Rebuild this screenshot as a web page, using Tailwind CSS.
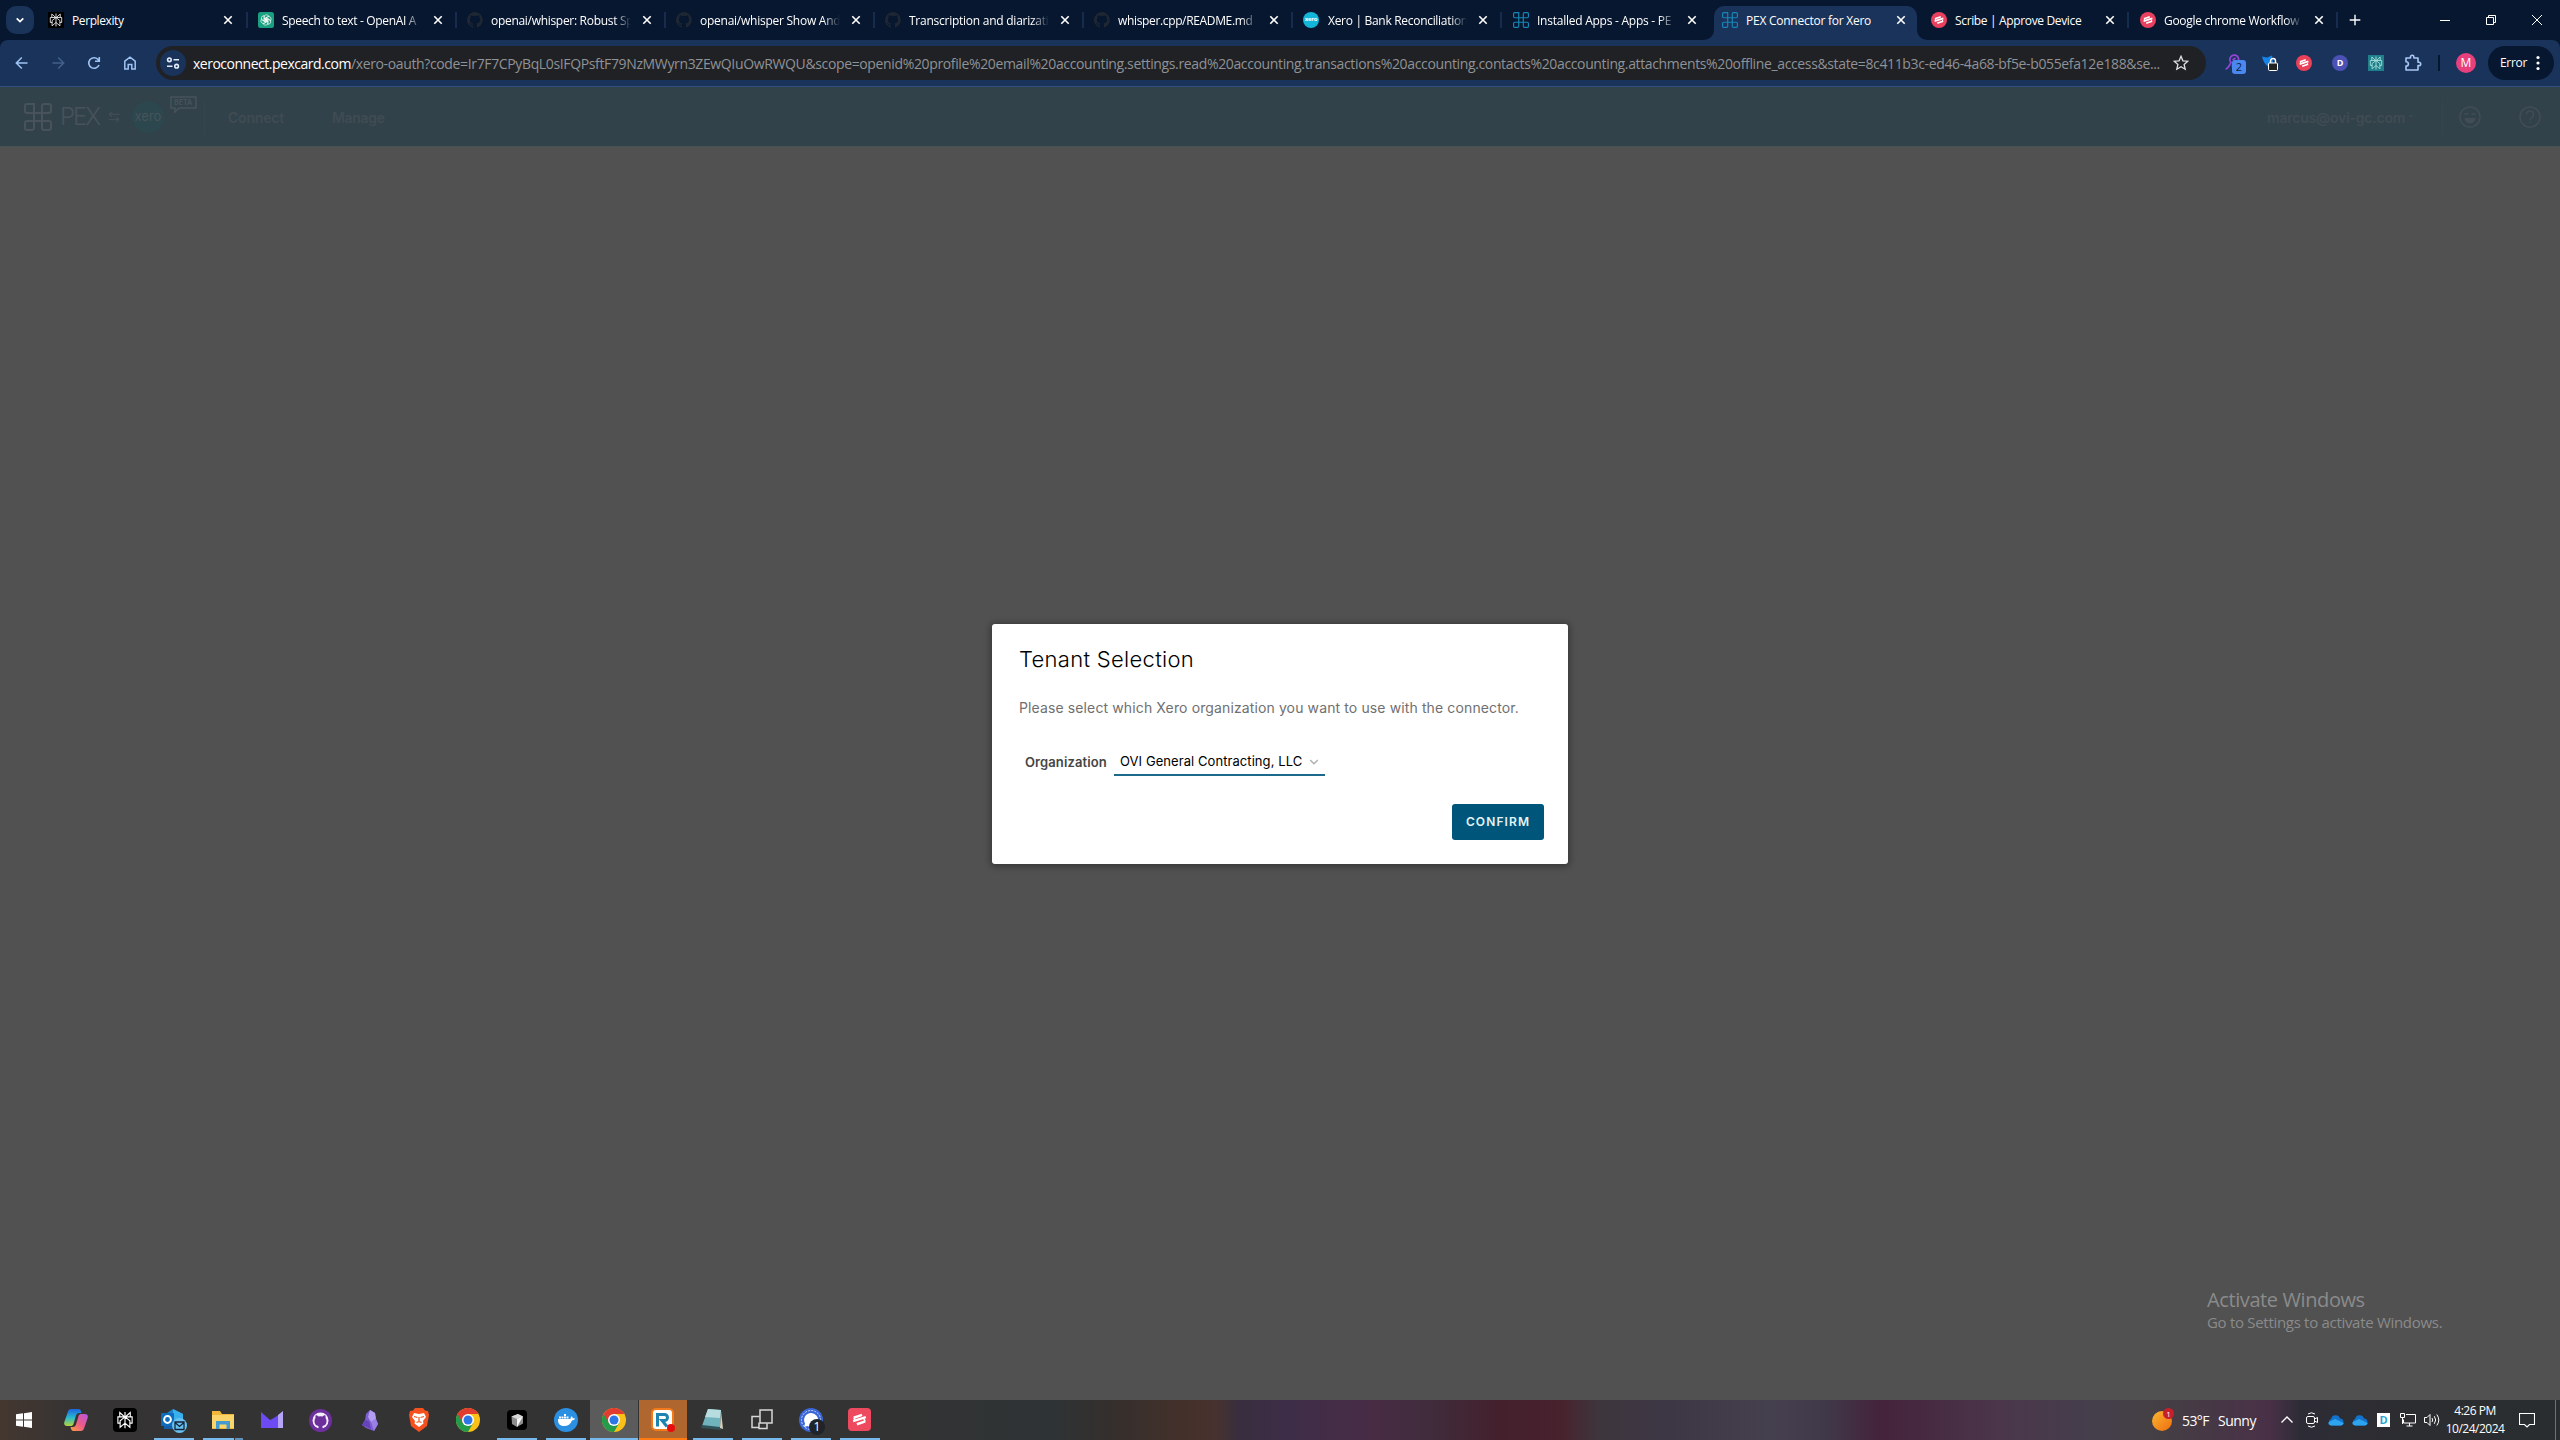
<!DOCTYPE html>
<html lang="en">
<head>
  <meta charset="UTF-8">
  <meta name="viewport" content="width=device-width, initial-scale=1.0">
  <title>PEX Connector for Xero</title>
  <script src="https://cdn.jsdelivr.net/npm/@tailwindcss/browser@4"></script>
</head>
<body class="w-[2560px] h-[1440px] overflow-hidden flex flex-col bg-[#515151] font-['Open_Sans',sans-serif]">

  <!-- Shared icons -->
  <svg class="hidden">
    <symbol id="close" viewBox="0 0 10 10"><path d="M1.3 1.3l7.4 7.4M8.7 1.3L1.3 8.7" stroke="#fff" stroke-width="1.6" fill="none"/></symbol>
    <symbol id="github" viewBox="0 0 16 16"><path fill="#1f2733" d="M8 0a8 8 0 0 0-2.5 15.6c.4.1.5-.2.5-.4v-1.500c-2.200.500-2.700-.900-2.700-.900-.400-.900-.900-1.200-.900-1.200-.700-.500.100-.500.100-.500.800.100 1.200.800 1.200.800.700 1.200 1.900.900 2.300.700.100-.500.300-.900.500-1.100-1.800-.200-3.600-.900-3.600-4 0-.900.300-1.600.800-2.100-.100-.200-.400-1 .100-2.100 0 0 .700-.200 2.200.800a7.600 7.600 0 0 1 4 0c1.500-1 2.200-.800 2.200-.800.400 1.100.200 1.900.100 2.100.500.600.800 1.300.800 2.100 0 3.100-1.900 3.700-3.600 3.900.300.300.500.700.500 1.500v2.200c0 .200.100.500.500.400A8 8 0 0 0 8 0z"/></symbol>
    <symbol id="pex" viewBox="0 0 28 28"><g fill="none" stroke="currentColor" stroke-width="2"><path d="M10 1H3a2 2 0 0 0-2 2v5a2 2 0 0 0 2 2h22a2 2 0 0 0 2-2V3a2 2 0 0 0-2-2h-5a2 2 0 0 0-2 2v22a2 2 0 0 0 2 2h5a2 2 0 0 0 2-2v-5a2 2 0 0 0-2-2H3a2 2 0 0 0-2 2v5a2 2 0 0 0 2 2h5a2 2 0 0 0 2-2V1z"/></g></symbol>
    <symbol id="scribe" viewBox="0 0 16 16"><path d="M4 6.800L9.800 4.800M3.600 9.100L12.400 6.400M6.200 11.300L12 9.300" stroke="#fff" stroke-width="1.700" fill="none"/><path d="M4 6.800l1 1.700M12 9.300l-1-1.700" stroke="#fff" stroke-width="1" fill="none"/></symbol>
    <symbol id="perplexity" viewBox="0 0 16 16"><path d="M8 1.500v13M3.800 5.500V2l4.200 3.800L12.200 2v3.500M2.300 5.500h11.400v5h-1.800V8.600L8 5.500 4.100 8.600v1.900H2.300zM4.100 10.200v3.600L8 10.500l3.900 3.300v-3.600" stroke="currentColor" stroke-width=".9" fill="none"/></symbol>
    <symbol id="chrome" viewBox="0 0 24 24"><circle cx="12" cy="12" r="12" fill="#fbc116"/><path d="M12 12L1.600 6A12 12 0 0 0 12 24l5.200-9z" fill="#249b4b"/><path d="M1.600 6a12 12 0 0 1 20.800 0H12l-5.200 9z" fill="#e23c30"/><circle cx="12" cy="12" r="6" fill="#fff"/><circle cx="12" cy="12" r="4.500" fill="#2c76e5"/></symbol>
    <symbol id="cloud" viewBox="0 0 16 11"><path d="M3.500 10.500A3.400 3.400 0 0 1 3 4a4.700 4.700 0 0 1 9-.6 3.600 3.600 0 0 1 .7 7.100z" fill="#1273ce"/><path d="M3 10.500c-1.800-.4-3-1.600-2.500-3.300L7 4l8.700 4c-.3 1.600-1.400 2.500-3 2.500z" fill="#2ea4ee"/></symbol>
  </svg>

  <!-- Tab strip -->
  <div class="h-10 flex shrink-0 bg-[#07172f] text-white text-[12px] tracking-[-0.25px]">
    <div class="w-10 pl-1.5 pt-1.5">
      <div class="w-7 h-7 rounded-[10px] bg-[#1a3358] flex items-center justify-center">
        <svg class="w-2.5 h-2.5" viewBox="0 0 10 10"><path d="M1.700 3.300L5 6.600l3.300-3.300" stroke="#fff" stroke-width="1.700" fill="none"/></svg>
      </div>
    </div>
    <div class="w-[209px] pl-2 pr-px flex items-center">
      <svg class="w-4 h-4 bg-black text-gray-200"><use href="#perplexity"/></svg>
      <span class="ml-2 mt-0.5 w-[138px] overflow-hidden whitespace-nowrap tracking-[-0.4px]">Perplexity</span>
      <svg class="ml-[13px] w-2.5 h-2.5"><use href="#close"/></svg>
      <span class="ml-auto w-0.5 h-4 bg-[#162c4c]"></span>
    </div>
    <div class="w-[209px] pl-[9px] pr-px flex items-center">
      <svg class="w-4 h-4" viewBox="0 0 16 16"><rect width="16" height="16" rx="2.500" fill="#1a9f80"/><g fill="none" stroke="#fff" stroke-width=".65"><path id="petal" d="M6 9.200V5.100a2.500 2.500 0 0 1 4.800-.8L7.500 6.200v3.900"/><use href="#petal" transform="rotate(60 8 8)"/><use href="#petal" transform="rotate(120 8 8)"/><use href="#petal" transform="rotate(180 8 8)"/><use href="#petal" transform="rotate(240 8 8)"/><use href="#petal" transform="rotate(300 8 8)"/></g></svg>
      <span class="ml-2 mt-0.5 w-[140px] overflow-hidden whitespace-nowrap tracking-[-0.33px] mask-r-from-88%">Speech to text - OpenAI A</span>
      <svg class="ml-[11px] w-2.5 h-2.5"><use href="#close"/></svg>
      <span class="ml-auto w-0.5 h-4 bg-[#162c4c]"></span>
    </div>
    <div class="w-[209px] pl-[9px] pr-px flex items-center">
      <svg class="w-4 h-4"><use href="#github"/></svg>
      <span class="ml-2 mt-0.5 w-[140px] overflow-hidden whitespace-nowrap tracking-[-0.3px] mask-r-from-88%">openai/whisper: Robust Sp</span>
      <svg class="ml-[11px] w-2.5 h-2.5"><use href="#close"/></svg>
      <span class="ml-auto w-0.5 h-4 bg-[#162c4c]"></span>
    </div>
    <div class="w-[209px] pl-[9px] pr-px flex items-center">
      <svg class="w-4 h-4"><use href="#github"/></svg>
      <span class="ml-2 mt-0.5 w-[140px] overflow-hidden whitespace-nowrap mask-r-from-88%">openai/whisper Show And</span>
      <svg class="ml-[11px] w-2.5 h-2.5"><use href="#close"/></svg>
      <span class="ml-auto w-0.5 h-4 bg-[#162c4c]"></span>
    </div>
    <div class="w-[209px] pl-[9px] pr-px flex items-center">
      <svg class="w-4 h-4"><use href="#github"/></svg>
      <span class="ml-2 mt-0.5 w-[140px] overflow-hidden whitespace-nowrap mask-r-from-88%">Transcription and diarizati</span>
      <svg class="ml-[11px] w-2.5 h-2.5"><use href="#close"/></svg>
      <span class="ml-auto w-0.5 h-4 bg-[#162c4c]"></span>
    </div>
    <div class="w-[209px] pl-[9px] pr-px flex items-center">
      <svg class="w-4 h-4"><use href="#github"/></svg>
      <span class="ml-2 mt-0.5 w-[140px] overflow-hidden whitespace-nowrap tracking-[-0.35px] mask-r-from-88%">whisper.cpp/README.md</span>
      <svg class="ml-[11px] w-2.5 h-2.5"><use href="#close"/></svg>
      <span class="ml-auto w-0.5 h-4 bg-[#162c4c]"></span>
    </div>
    <div class="w-[209px] pl-[9px] pr-px flex items-center">
      <span class="w-4 h-4 rounded-full bg-[#13b5d8] text-[6px] leading-[15px] text-center tracking-[-0.2px] font-bold">xero</span>
      <span class="ml-[9px] mt-0.5 w-[139px] overflow-hidden whitespace-nowrap tracking-[-0.3px] mask-r-from-88%">Xero | Bank Reconciliation</span>
      <svg class="ml-[11px] w-2.5 h-2.5"><use href="#close"/></svg>
      <span class="ml-auto w-0.5 h-4 bg-[#162c4c]"></span>
    </div>
    <div class="w-[209px] pl-[10px] flex items-center">
      <svg class="w-4 h-4 text-[#1787b8]"><use href="#pex"/></svg>
      <span class="ml-2 mt-0.5 w-[139px] overflow-hidden whitespace-nowrap mask-r-from-88%">Installed Apps - Apps - PE</span>
      <svg class="ml-[11px] w-2.5 h-2.5"><use href="#close"/></svg>
    </div>
    <div class="w-[209px] pl-[2px] pr-1 pt-1.5 relative flex">
      <div class="flex-1 pl-2 pb-1.5 rounded-t-[10px] bg-[#1a335a] flex items-center">
        <svg class="w-4 h-4 text-[#1787b8]"><use href="#pex"/></svg>
        <span class="ml-2 mt-0.5 w-[138px] overflow-hidden whitespace-nowrap">PEX Connector for Xero</span>
        <svg class="ml-3 w-2.5 h-2.5"><use href="#close"/></svg>
      </div>
      <svg class="absolute -left-2 bottom-0 w-2.5 h-2.5" viewBox="0 0 10 10"><path d="M10 0v10H0A10 10 0 0 0 10 0z" fill="#1a335a"/></svg>
      <svg class="absolute -right-1.5 bottom-0 w-2.5 h-2.5" viewBox="0 0 10 10"><path d="M0 0v10h10A10 10 0 0 1 0 0z" fill="#1a335a"/></svg>
    </div>
    <div class="w-[209px] pl-[10px] pr-px flex items-center">
      <svg class="w-4 h-4 rounded-full bg-[#e9405f]"><use href="#scribe"/></svg>
      <span class="ml-2 mt-0.5 w-[138px] overflow-hidden whitespace-nowrap tracking-[-0.35px]">Scribe | Approve Device</span>
      <svg class="ml-[12px] w-2.5 h-2.5"><use href="#close"/></svg>
      <span class="ml-auto w-0.5 h-4 bg-[#162c4c]"></span>
    </div>
    <div class="w-[209px] pl-[10px] pr-px flex items-center">
      <svg class="w-4 h-4 rounded-full bg-[#e9405f]"><use href="#scribe"/></svg>
      <span class="ml-2 mt-0.5 w-[138px] overflow-hidden whitespace-nowrap tracking-[-0.3px] mask-r-from-88%">Google chrome Workflow</span>
      <svg class="ml-3 w-2.5 h-2.5"><use href="#close"/></svg>
      <span class="ml-auto w-0.5 h-4 bg-[#162c4c]"></span>
    </div>
    <div class="flex-1 flex items-center">
      <svg class="ml-[10px] w-3 h-3" viewBox="0 0 12 12"><path d="M6 .7v10.600M.7 6h10.600" stroke="#fff" stroke-width="1.400"/></svg>
      <svg class="ml-[79px] w-[10px] h-[10px]" viewBox="0 0 10 10"><path d="M0 5.500h10" stroke="#fff"/></svg>
      <svg class="ml-9 w-[10px] h-[10px]" viewBox="0 0 10 10"><path d="M.5 2.500h7v7h-7zM2.500 2.500v-2h7v7h-2" stroke="#fff" fill="none"/></svg>
      <svg class="ml-9 w-[10px] h-[10px]" viewBox="0 0 10 10"><path d="M0 0l10 10M10 0L0 10" stroke="#fff"/></svg>
    </div>
  </div>

  <!-- Toolbar -->
  <div class="bg-[#07172f]">
    <div class="h-[46px] rounded-t-lg bg-[#1a335a] flex items-center">
      <svg class="ml-[14px] w-4 h-4" viewBox="0 0 16 16"><path d="M13.500 8H2.500M7.800 2.500L2.300 8l5.500 5.500" stroke="#9fc3f3" stroke-width="1.500" fill="none"/></svg>
      <svg class="ml-5 w-4 h-4" viewBox="0 0 16 16"><path d="M2.500 8h11M8.200 2.500L13.700 8l-5.500 5.500" stroke="#43608c" stroke-width="1.500" fill="none"/></svg>
      <svg class="ml-5 w-4 h-4" viewBox="0 0 16 16"><path d="M13 10A5.300 5.300 0 1 1 11.800 4.200L13.300 6M13.300 2v4.200H9" stroke="#9fc3f3" stroke-width="1.600" fill="none"/></svg>
      <svg class="ml-5 w-4 h-4" viewBox="0 0 16 16"><path d="M2.800 6.200L8 2.100l5.200 4.100v7.700H9.800V9.500H6.200v4.400H2.800z" stroke="#9fc3f3" stroke-width="1.500" fill="none"/></svg>
      <div class="ml-[18px] w-[2050px] h-[34px] rounded-full bg-[#202124] flex items-center">
        <div class="ml-1 w-[26px] h-[26px] rounded-full bg-[#1a335a] flex items-center justify-center">
          <svg class="w-3.5 h-3.5" viewBox="0 0 14 14"><g stroke="#e3ecfa" stroke-width="1.600" fill="none"><circle cx="3.400" cy="3.800" r="1.800"/><path d="M7.500 3.800H13M1 10.200h5.500"/><circle cx="10.600" cy="10.200" r="1.800"/></g></svg>
        </div>
        <span class="ml-[7px] w-[1965px] whitespace-nowrap text-[14px] text-[#8f9296] tracking-[-0.36px]"><span class="text-white tracking-[-0.49px]">xeroconnect.pexcard.com</span>/xero-oauth?code=Ir7F7CPyBqL0sIFQPsftF79NzMWyrn3ZEwQIuOwRWQU&amp;scope=openid%20profile%20email%20accounting.settings.read%20accounting.transactions%20accounting.contacts%20accounting.attachments%20offline_access&amp;state=8c411b3c-ed46-4a68-bf5e-b055efa12e188&amp;se...</span>
        <svg class="ml-[15px] w-4 h-4" viewBox="0 0 16 16"><path d="M8 1.300l1.900 4.500 4.900.4-3.700 3.200 1.100 4.800L8 11.700l-4.200 2.500 1.100-4.800L1.200 6.200l4.900-.4z" stroke="#dfe1e5" stroke-width="1.300" fill="none"/></svg>
      </div>
      <div class="relative ml-[18px] w-6 h-6">
        <svg class="w-[18px] h-[18px] mt-0.5" viewBox="0 0 18 18"><path d="M1.500 16C4 16 5 13 7 9.500A4.400 4.400 0 1 1 12 10.500c-2-.5-3 .5-4 3M8.500 7l3-2" stroke="#9445d8" stroke-width="1.700" fill="none"/></svg>
        <span class="absolute left-2 top-[9px] w-3.5 h-3.5 rounded-[3px] bg-[#4a88f0] text-[#0a1d3c] text-[11px] leading-[14px] text-center">2</span>
      </div>
      <svg class="ml-3.5 w-4 h-4" viewBox="0 0 16 16"><path d="M0 1.500l5 1 5-2 1 7-3 5C4 11 1 6.500 0 1.500z" fill="#1683e8"/><rect x="6.500" y="8" width="9" height="7.500" rx="1" fill="#222" stroke="#fff"/><path d="M8.500 8V6a2.500 2.500 0 0 1 5 0v2" stroke="#fff" stroke-width="1.400" fill="none"/></svg>
      <svg class="ml-[18px] w-4 h-4 rounded-full bg-[#ea4058]"><use href="#scribe"/></svg>
      <span class="ml-5 w-4 h-4 rounded-full bg-[#4c51b5] text-white text-[9px] leading-4 font-bold text-center">D</span>
      <svg class="ml-5 w-4 h-4 bg-[#1f7f8a] text-[#a8dfdc]"><use href="#perplexity"/></svg>
      <svg class="ml-5 w-[18px] h-[18px]" viewBox="0 0 18 18"><path d="M2 4h4.500V3a1.700 1.700 0 0 1 3.400 0v1H14v4.200h1a1.700 1.700 0 0 1 0 3.400h-1V16H2v-4c3.200 0 3.200-4.200 0-4.200z" stroke="#a9c7f5" stroke-width="1.600" fill="none" stroke-linejoin="round"/></svg>
      <span class="ml-[16px] w-0.5 h-4 bg-[#07172f]"></span>
      <span class="ml-4 w-5 h-5 rounded-full bg-[#e8407c] text-white text-[12px] leading-5 text-center">M</span>
      <div class="ml-3 w-[66px] h-[34px] rounded-full bg-[#07172f] text-white text-[12px] flex items-center">
        <span class="ml-3 w-[26px] tracking-[-0.3px]">Error</span>
        <svg class="ml-[10px] w-1 h-4" viewBox="0 0 4 16"><g fill="#fff"><circle cx="2" cy="2.500" r="1.600"/><circle cx="2" cy="8" r="1.600"/><circle cx="2" cy="13.500" r="1.600"/></g></svg>
      </div>
    </div>
    <div class="h-px bg-[#33507c]"></div>
  </div>

  <!-- App header, dimmed by the modal backdrop -->
  <header class="h-[60px] shrink-0 bg-[#31424b] border-b border-[#4a5153] flex items-center pt-px font-['Inter',sans-serif] text-[#404b52] whitespace-nowrap">
    <svg class="ml-6 w-[28px] h-[28px] shrink-0 text-[#47525a]"><use href="#pex"/></svg>
    <span class="ml-2 w-[39px] shrink-0 text-[24px] font-light tracking-[-2px] text-[#47525a]">PEX</span>
    <svg class="ml-[9px] w-3 h-3 shrink-0" viewBox="0 0 12 12"><path d="M4 .8L1 3.300l3 2.500M1 3.300h10.500M8 6.200l3 2.500-3 2.500M11 8.700H.5" stroke="#47525a" fill="none"/></svg>
    <span class="ml-3 w-8 h-8 shrink-0 rounded-full bg-[#2d474e] text-[#46545a] text-[13px] leading-[30px] flex justify-center">xero</span>
    <div class="relative w-[40px] h-14 shrink-0">
      <svg class="absolute left-[6px] top-[7px] w-[27px] h-[18px]" viewBox="0 0 27 18"><path d="M1 1h25v11H9l-4 4v-4H1z" stroke="#47535a" stroke-width="1.500" fill="none"/></svg>
      <span class="absolute left-[10px] top-[8px] text-[7px] leading-[11px] font-bold text-[#47535a]">BETA</span>
    </div>
    <span class="w-px h-9 bg-[#35454e]"></span>
    <span class="ml-[23px] w-[56px] text-[14px] font-semibold tracking-[-0.2px]">Connect</span>
    <span class="ml-[48px] text-[14px] font-semibold tracking-[-0.3px]">Manage</span>
    <div class="ml-auto flex items-center">
      <span class="w-[137px] text-[14px] font-semibold tracking-[-0.2px]">marcus@ovi-gc.com</span>
      <svg class="ml-1 w-1.5 h-1" viewBox="0 0 6 4"><path d="M0 0h6L3 3z" fill="#3c4850"/></svg>
      <span class="ml-[28px] w-px h-9 bg-[#35454e]"></span>
      <svg class="ml-4 w-[22px] h-[22px]" viewBox="0 0 22 22"><g fill="none" stroke="#414c53" stroke-width="1.600"><circle cx="11" cy="11" r="10"/><path d="M6 9c0-2 3-2 3 0M13 9c0-2 3-2 3 0"/></g><path d="M5.500 12h11a5.500 5.500 0 0 1-11 0z" fill="#414c53"/></svg>
      <svg class="ml-[38px] mr-[19px] w-[22px] h-[22px]" viewBox="0 0 22 22"><g fill="none" stroke="#414c53" stroke-width="1.600"><circle cx="11" cy="11" r="10"/><path d="M7.500 8.500a3.500 3.500 0 1 1 5 3.200c-1 .5-1.500 1-1.500 2.300M11 15.500v1.600"/></g></svg>
    </div>
  </header>

  <!-- Page -->
  <main class="relative flex-1 flex flex-col items-center pt-[477px] font-['Inter',sans-serif]">
    <div class="w-[576px] h-[240px] rounded-[3px] bg-white shadow-[0_1px_6px_2px_rgba(0,0,0,0.3)] pl-[27px] pr-6 flex flex-col">
      <h1 class="mt-[19px] text-[22px] leading-8 font-light text-black tracking-[0.3px]">Tenant Selection</h1>
      <p class="mt-[21px] text-[14px] leading-6 text-[#707070] tracking-[0.12px] whitespace-nowrap">Please select which Xero organization you want to use with the connector.</p>
      <div class="mt-[29px] flex h-7">
        <label class="ml-1.5 w-[89px] pt-1 text-[13px] leading-6 mt-[-3px] font-semibold text-[#454545] tracking-[0.1px]">Organization</label>
        <div class="w-[211px] h-[27px] pl-1.5 pt-px border-b-2 border-[#1b6a8c] flex items-center text-[13px] text-black">
          <span class="w-[183px] whitespace-nowrap tracking-[0.07px]">OVI General Contracting, LLC</span>
          <svg class="ml-[6px] w-2.5 h-2.5" viewBox="0 0 10 10"><path d="M1.200 3L5 6.800 8.800 3" stroke="#b0b0b0" stroke-width="1.400" fill="none"/></svg>
        </div>
      </div>
      <button class="mt-[27px] self-end w-[92px] h-9 rounded-[3px] bg-[#00567a] text-[#e4f3f8] text-[12px] font-semibold tracking-[1.1px]">CONFIRM</button>
    </div>
    <div class="absolute left-[2207px] top-[1139px] font-['Open_Sans',sans-serif] text-[#8b8b8b]">
      <p class="text-[20px] leading-7 tracking-[-0.4px] whitespace-nowrap">Activate Windows</p>
      <p class="text-[15px] leading-[17px] tracking-[-0.3px] whitespace-nowrap">Go to Settings to activate Windows.</p>
    </div>
  </main>

  <!-- Taskbar -->
  <footer class="h-10 shrink-0 flex items-center bg-[linear-gradient(90deg,#443730_0px,#363333_70px,#333333_220px,#333_900px,#2e3335_1050px,#342f2d_1110px,#45302a_1190px,#48322f_1215px,#382e3f_1240px,#3e2d48_1290px,#482c45_1370px,#402c3c_1430px,#44202d_1500px,#48222d_1560px,#3e363d_1600px,#3d3645_1670px,#45404e_1770px,#40394a_1825px,#44233c_1880px,#4b364b_2000px,#443f4b_2100px,#444044_2150px,#493047_2270px,#2d2c36_2300px,#2c2d31_2400px,#292d30_2560px)]">
    <div class="w-12 h-10 flex items-center justify-center">
      <svg class="w-4 h-4" viewBox="0 0 16 16"><path d="M0 2.300L7 1.300v6.300H0zM8 1.200L16 0v7.600H8zM0 8.500h7v6.300l-7-1zM8 8.500h8V16l-8-1.200z" fill="#fff"/></svg>
    </div>
    <div class="w-[49px] ml-[3px] h-10 flex items-center justify-center">
      <svg class="w-6 h-6" viewBox="0 0 24 24"><defs><linearGradient id="cpA" x1="0" y1="0" x2="0" y2="1"><stop offset="0" stop-color="#1c63e0"/><stop offset=".5" stop-color="#28b8d0"/><stop offset="1" stop-color="#b6d63a"/></linearGradient><linearGradient id="cpB" x1="0" y1="1" x2="1" y2="0"><stop offset="0" stop-color="#f9a03c"/><stop offset=".5" stop-color="#ed5a8c"/><stop offset="1" stop-color="#b259e0"/></linearGradient></defs><path d="M7 1h7.500c2 0 2.500 2 3 4h-2.500c-1.500 0-2.500 1-3 2.500L9.500 16c-.5 1.500-1.500 2-3 2H3c-2.500 0-3.500-2-2.500-4.500l3.500-10C4.500 2 5.500 1 7 1z" fill="url(#cpA)"/><path d="M17 23H9.500c-2 0-2.500-2-3-4H9c1.500 0 2.500-1 3-2.500L14.500 8c.5-1.500 1.500-2 3-2H21c2.500 0 3.500 2 2.500 4.500l-3.500 10C19.500 22 18.500 23 17 23z" fill="url(#cpB)"/></svg>
    </div>
    <div class="w-[49px] h-10 flex items-center justify-center">
      <svg class="w-6 h-6 rounded-sm bg-black p-0.5 text-white"><use href="#perplexity"/></svg>
    </div>
    <div class="w-[49px] h-10 px-[5px] flex flex-col items-center">
      <svg class="mt-[7px] w-[27px] h-[27px]" viewBox="0 0 27 27"><path d="M4 8l9-6 10 5v13H4z" fill="#1c82d2"/><path d="M13 2l10 5v6H13z" fill="#37b0ec"/><path d="M4 15h19v7H4z" fill="#155fa8"/><rect x="1" y="6" width="13" height="13" rx="1" fill="#0f6cbd"/><circle cx="7.500" cy="12.500" r="3.400" stroke="#fff" stroke-width="2" fill="none"/><circle cx="19.500" cy="18.500" r="7.500" fill="#69c1f2"/><path d="M15 15h9v7.500h-9zM15 15.500l4.500 4 4.500-4" stroke="#13253a" stroke-width="1.300" fill="none"/></svg>
      <span class="mt-auto w-10 h-0.5 bg-[#76b9ed]"></span>
    </div>
    <div class="w-[49px] h-10 flex flex-col items-center">
      <svg class="mt-[9px] w-[22px] h-[22px]" viewBox="0 0 22 22"><path d="M0 2h8l2 3h12v15H0z" fill="#f0b73a"/><path d="M0 6h22v13H0z" fill="#fbd569"/><path d="M4 20v-8h14v8h-3.500v-4.500h-7V20z" fill="#439bd0"/></svg>
      <div class="mt-auto w-10 h-0.5 flex"><span class="w-[31px] bg-[#76b9ed]"></span><span class="w-px"></span><span class="w-2 bg-[#5e90b8]"></span></div>
    </div>
    <div class="w-[49px] h-10 flex items-center justify-center">
      <svg class="w-[22px] h-[18px]" viewBox="0 0 22 18"><path d="M0 1l9 8 3-1.500L22 1v16H0z" fill="#6c4bf4"/><path d="M17 4l5-4v17h-5z" fill="#b6a4f8"/></svg>
    </div>
    <div class="w-[49px] h-10 flex items-center justify-center">
      <svg class="w-[23px] h-[23px]" viewBox="0 0 23 23"><circle cx="11.500" cy="11.500" r="11.500" fill="#6d2f9c"/><circle cx="11.500" cy="11.500" r="8" fill="#f4eefa"/><path d="M9.500 20v-3c-2-.3-4-1.300-4-5 0-1.200.4-2.200 1-3-.2-.8-.2-1.900.2-2.800 1 0 2 .6 2.800 1.200a8 8 0 0 1 4 0c.8-.6 1.800-1.200 2.800-1.200.4.900.4 2 .2 2.800.6.800 1 1.800 1 3 0 3.700-2 4.700-4 5v3z" fill="#6d2f9c"/></svg>
    </div>
    <div class="w-[49px] h-10 flex items-center justify-center">
      <svg class="w-[18px] h-[23px]" viewBox="0 0 18 23"><path d="M9 1l5 3 1 6 2 5-4 7-8-3-4-3 3-5 1-6z" fill="#7c5fd0"/><path d="M9 1l5 3 1 6-5 3-3-5z" fill="#b49cf0"/><path d="M10 13l5-3 2 5-4 7z" fill="#9a7fe4"/><path d="M4 11l4 1 2 8-9-4z" fill="#6544bb"/></svg>
    </div>
    <div class="w-[49px] h-10 flex items-center justify-center">
      <svg class="w-5 h-6" viewBox="0 0 20 24"><path d="M6 0h8l2 2.500 3 .5 1 4-2 11-8 6-8-6L0 7l1-4 3-.5z" fill="#f4511e"/><path d="M5 5l5 1 5-1 2 4-3 4 .5 2.500L10 19l-4.500-3.500L6 13 3 9z" fill="#fff"/><path d="M5 8.500l3.500 1M15 8.500l-3.500 1M10 9v4.500M7.500 14.500L10 13.500l2.500 1" stroke="#f4511e" stroke-width="1.200" fill="none"/></svg>
    </div>
    <div class="w-[49px] h-10 flex items-center justify-center">
      <svg class="w-6 h-6"><use href="#chrome"/></svg>
    </div>
    <div class="w-[49px] h-10 flex flex-col items-center">
      <svg class="mt-2.5 w-5 h-5" viewBox="0 0 20 20"><rect width="20" height="20" rx="4" fill="#000"/><path d="M4.500 6.500L11 4l5 2.500v7L10 17l-5-3z" fill="#8d8d8d"/><path d="M4.500 6.500L11 4l5 2.500L10 9z" fill="#d8d8d8"/><path d="M10 9l6-2.500-6 10.500z" fill="#f5f5f5"/></svg>
      <span class="mt-auto w-10 h-0.5 bg-[#76b9ed]"></span>
    </div>
    <div class="w-[49px] h-10 flex flex-col items-center">
      <svg class="mt-2 w-6 h-6" viewBox="0 0 24 24"><circle cx="12" cy="12" r="12" fill="#2b8fe2"/><path d="M4 11h12.500c0-1.200.3-2 1-2.800 1 .6 1.300 1.400 1.300 2.200 1-.1 1.600 0 2.200.4-.6 1.200-1.700 1.700-3 1.700-1.500 3.700-4 5.500-8 5.500-4.200 0-6.300-2.500-6-7z" fill="#fff"/><path d="M5 8.500h2v2H5zM7.500 8.500h2v2h-2zM10 8.500h2v2h-2zM12.500 8.500h2v2h-2zM10 6h2v2h-2z" fill="#fff"/></svg>
      <span class="mt-auto w-10 h-0.5 bg-[#76b9ed]"></span>
    </div>
    <div class="w-12 mr-px h-10 bg-[#5b5b5b] flex flex-col items-center">
      <svg class="mt-2 w-6 h-6"><use href="#chrome"/></svg>
      <span class="mt-auto w-12 h-0.5 bg-[#76b9ed]"></span>
    </div>
    <div class="w-12 mr-px h-10 bg-[#b0662f] flex flex-col items-center">
      <svg class="mt-2 w-6 h-6" viewBox="0 0 24 24"><rect x="1" y="1" width="21" height="21" rx="4" fill="#fff" stroke="#f27a1a" stroke-width="2"/><path d="M6.500 18.500V6.500h7a3 3 0 0 1 0 6H11l5 6" stroke="#1d83b0" stroke-width="3" fill="none"/><circle cx="20" cy="20" r="4" fill="#e80c0c"/></svg>
      <span class="mt-auto w-12 h-0.5 bg-[#ff7a10]"></span>
    </div>
    <div class="w-[49px] h-10 flex flex-col items-center">
      <svg class="mt-2 -ml-0.5 w-[24px] h-6" viewBox="0 0 24 24"><path d="M8 1l13 1-1 18-18-2z" fill="#6fb3bd"/><path d="M8 1l13 1-1 8L5 9z" fill="#b8dde0"/><path d="M2 17l18 2 1 3-20-2z" fill="#31535a"/><path d="M21 3l2 18-3-1z" fill="#d8d3bd"/></svg>
      <span class="mt-auto w-10 h-0.5 bg-[#76b9ed]"></span>
    </div>
    <div class="w-[49px] h-10 flex flex-col items-center">
      <svg class="mt-[9px] w-[22px] h-[21px]" viewBox="0 0 22 21"><g fill="none" stroke="#d8d8d8" stroke-width="1.500"><path d="M8 13.500V19.500h8v-5"/><path d="M8.500 7.500H1v11h7"/><path d="M9 1h12v13H9z"/></g></svg>
      <span class="mt-auto w-10 h-0.5 bg-[#76b9ed]"></span>
    </div>
    <div class="w-[49px] h-10 relative flex flex-col items-center">
      <svg class="mt-2 w-6 h-6" viewBox="0 0 24 24"><circle cx="12" cy="12" r="12" fill="#3a66d8"/><circle cx="12" cy="12" r="9.500" fill="none" stroke="#cdd9f7" stroke-dasharray="2 1.200"/><path d="M12 5a7 7 0 1 1-3.500 13L5 19l1-3.500A7 7 0 0 1 12 5z" fill="#fff"/></svg>
      <span class="absolute left-[23px] top-[19px] w-4 h-4 rounded-full bg-[#1f2429] text-white text-[12px] leading-4 text-center">1</span>
      <span class="mt-auto w-10 h-0.5 bg-[#76b9ed]"></span>
    </div>
    <div class="w-[49px] h-10 flex flex-col items-center">
      <svg class="mt-2 w-[23px] h-[23px] rounded bg-[#ee4a5f]"><use href="#scribe"/></svg>
      <span class="mt-auto w-10 h-0.5 bg-[#76b9ed]"></span>
    </div>

    <!-- System tray -->
    <div class="ml-auto flex items-center h-10 text-white">
      <div class="relative w-[22px] h-6">
        <svg class="w-5 h-5 mt-[3px]" viewBox="0 0 20 20"><defs><linearGradient id="sun" x1="0" y1="0" x2="1" y2="1"><stop offset="0" stop-color="#fbb62e"/><stop offset="1" stop-color="#ee6d12"/></linearGradient></defs><circle cx="10" cy="10" r="10" fill="url(#sun)"/></svg>
        <span class="absolute left-[11px] top-0 w-[11px] h-[11px] rounded-full bg-[#c6202a] text-[8px] leading-[11px] text-center">1</span>
      </div>
      <span class="ml-2 w-9 text-[14px] tracking-[-0.6px]">53°F</span>
      <span class="w-[62px] text-[14px] tracking-[-0.5px]">Sunny</span>
      <svg class="w-3.5 h-3.5" viewBox="0 0 14 14"><path d="M1.500 9.500L7 4l5.500 5.500" stroke="#fff" stroke-width="1.400" fill="none"/></svg>
      <svg class="ml-2.5 w-4 h-4" viewBox="0 0 16 16"><g fill="none" stroke="#fff"><rect x="2.500" y="4.500" width="8" height="7" rx="1.500"/><path d="M10.500 7l3-1.500v5l-3-1.500M4 2Q7.500-.5 11 2M4 14q3.500 2.500 7 0"/></g></svg>
      <svg class="ml-2 w-4 h-[11px]"><use href="#cloud"/></svg>
      <svg class="ml-2 w-4 h-[11px]"><use href="#cloud"/></svg>
      <span class="ml-[9px] w-[13px] h-3.5 bg-white text-[#1fa6d2] text-[11px] leading-3.5 font-bold text-center">D</span>
      <svg class="ml-2.5 w-4 h-3.5" viewBox="0 0 16 14"><g fill="none" stroke="#fff"><path d="M6 1.500h9.500v8.500h-12V6.500M9.500 10v3M6.500 13h6"/><path d="M.5.500h4v4h-4zM2.500 4.500V11"/></g></svg>
      <svg class="ml-2 w-4 h-4" viewBox="0 0 16 16"><path d="M.5 5.500h2.500l3-3v11l-3-3H.5zM8 6q1.500 2 0 4M10.300 4.200q2.800 3.800 0 7.600M12.800 2.500q4 5.500 0 11" stroke="#fff" fill="none"/></svg>
      <div class="ml-1.5 w-[58px] flex flex-col items-center text-[12px] leading-[18px] tracking-[-0.5px] whitespace-nowrap">
        <span>4:26 PM</span>
        <span>10/24/2024</span>
      </div>
      <svg class="ml-[15px] w-4 h-4" viewBox="0 0 16 16"><path d="M.5 1.500h15v11h-5L8 15l-2.500-2.500h-5z" stroke="#fff" fill="none" stroke-width="1.100"/></svg>
      <span class="ml-5 mr-1 w-px h-10 bg-[#6f7173]"></span>
    </div>
  </footer>
</body>
</html>
